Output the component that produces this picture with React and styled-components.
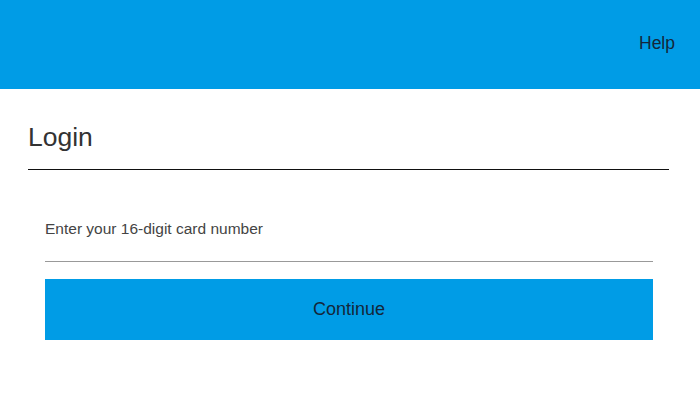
import styled, {createGlobalStyle} from 'styled-components';

const GlobalStyle = createGlobalStyle`
  body {
    margin: 0;
    font-family: "Liberation Sans", Arial, sans-serif;
    background: #fff;
  }
`;

const App = () => {
  return (
    <>
      <GlobalStyle />
      <Header>
        <HelpLink href="#">Help</HelpLink>
      </Header>
      <Main>
        <Title>Login</Title>
        <Form onSubmit={e => e.preventDefault()}>
          <Label htmlFor="card">Enter your 16-digit card number</Label>
          <CardInput id="card" type="text" />
          <ContinueButton type="submit">Continue</ContinueButton>
        </Form>
      </Main>
    </>
  );
};

export default App;

const Header = styled.header`
  height: 89px;
  background: #009ce6;
  display: flex;
  align-items: center;
  justify-content: flex-end;
  padding: 0 25px;
`;

const HelpLink = styled.a`
  font-size: 17.5px;
  color: #14273a;
  text-decoration: none;
  margin-top: -2px;
`;

const Main = styled.main`
  padding: 0 31px 0 28px;
`;

const Title = styled.h1`
  margin: 34px 0 0;
  padding-bottom: 17px;
  font-size: 26.5px;
  font-weight: 400;
  line-height: 29px;
  color: #333;
  border-bottom: 1px solid #111;
`;

const Form = styled.form`
  display: flex;
  flex-direction: column;
  padding: 0 16px 0 17px;
  margin-top: 50px;
`;

const Label = styled.label`
  font-size: 15.5px;
  line-height: 18px;
  color: #444;
`;

const CardInput = styled.input`
  border: none;
  border-bottom: 1px solid #999;
  height: 23px;
  padding: 0;
  outline: none;
  font-family: inherit;
  font-size: 14px;
`;

const ContinueButton = styled.button`
  margin-top: 17px;
  height: 61px;
  border: none;
  background: #009ce6;
  color: #14273a;
  font-family: inherit;
  font-size: 18px;
  cursor: pointer;
`;
